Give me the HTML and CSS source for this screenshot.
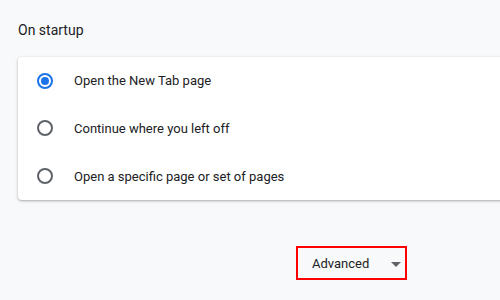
FILE: index.html
```html
<!DOCTYPE html>
<html>

<head>
    <title>Settings</title>
    <link rel="stylesheet" href="styles.css">
</head>

<body>
    <div class="section-title">On startup</div>

    <div class="card">
        <div class="row">
            <span class="radio checked"></span>
            <span>Open the New Tab page</span>
        </div>
        <div class="row">
            <span class="radio"></span>
            <span>Continue where you left off</span>
        </div>
        <div class="row">
            <span class="radio"></span>
            <span>Open a specific page or set of pages</span>
        </div>
    </div>

    <div class="advanced-wrap">
        <div class="advanced">
            <span>Advanced</span>
            <span class="arrow"></span>
        </div>
    </div>
</body>

</html>
```

FILE: styles.css
```css
body {
    margin: 0;
    background-color: #f8f9fa;
    font-family: Roboto, "Liberation Sans", sans-serif;
    font-size: 13px;
    color: #202124;
    overflow: hidden;
}

.section-title {
    padding: 22px 0 0 18px;
    height: 35px;
    font-size: 14px;
    color: #202124;
}

.card {
    margin-left: 18px;
    width: 500px;
    background-color: #fff;
    border-radius: 4px;
    box-shadow: 0 1px 2px rgba(60, 64, 67, 0.3), 0 1px 3px 1px rgba(60, 64, 67, 0.1);
}

.row {
    display: flex;
    align-items: center;
    height: 48px;
    padding-left: 19px;
}

.row:first-child {
    height: 47px;
}

.radio {
    box-sizing: border-box;
    width: 16px;
    height: 16px;
    border: 2px solid #5f6368;
    border-radius: 50%;
    margin-right: 21px;
    position: relative;
}

.radio.checked {
    border-color: #1a73e8;
}

.radio.checked::after {
    content: "";
    position: absolute;
    left: 2px;
    top: 2px;
    width: 8px;
    height: 8px;
    border-radius: 50%;
    background-color: #1a73e8;
}

.advanced-wrap {
    display: flex;
    padding-top: 46px;
    padding-left: 296px;
}

.advanced {
    display: flex;
    align-items: center;
    box-sizing: border-box;
    width: 111px;
    height: 34px;
    border: 2px solid #f00;
    padding-left: 14px;
    color: #202124;
}

.arrow {
    margin-left: 22px;
    margin-top: 2px;
    width: 0;
    height: 0;
    border-left: 5px solid transparent;
    border-right: 5px solid transparent;
    border-top: 5px solid #5f6368;
}
```
